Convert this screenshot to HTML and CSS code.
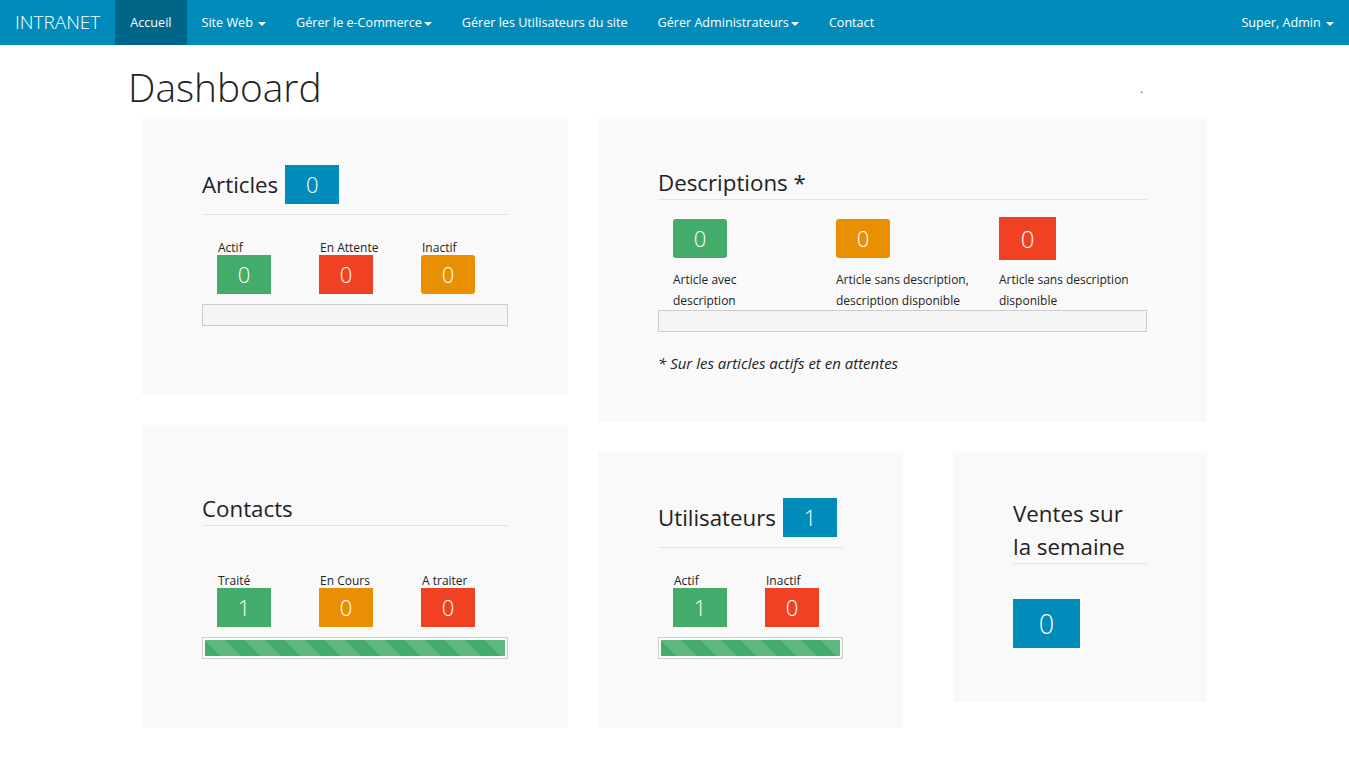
FILE: index.html
```html
<!DOCTYPE html>
<html lang="fr">
<head>
<meta charset="utf-8">
<title>Dashboard</title>
<link rel="stylesheet" href="styles.css">
</head>
<body>
<nav class="navbar">
  <a class="brand" href="#">INTRANET</a>
  <ul class="nav">
    <li class="active"><a href="#">Accueil</a></li>
    <li><a href="#">Site Web <span class="caret"></span></a></li>
    <li><a href="#">Gérer le e-Commerce<span class="caret"></span></a></li>
    <li><a href="#">Gérer les Utilisateurs du site</a></li>
    <li><a href="#">Gérer Administrateurs<span class="caret"></span></a></li>
    <li><a href="#">Contact</a></li>
  </ul>
  <ul class="nav nav-right">
    <li><a href="#">Super, Admin <span class="caret"></span></a></li>
  </ul>
</nav>

<main class="page">
  <div class="page-header">
    <h1>Dashboard</h1>
    <span class="dot">.</span>
  </div>

  <div class="grid">
    <div class="col col-left">
      <section class="panel panel-articles">
        <div class="heading heading-badge">
          <h3>Articles</h3>
          <span class="badge">0</span>
        </div>
        <div class="stats stats-3">
          <div class="stat"><div class="stat-label">Actif</div><div class="box green">0</div></div>
          <div class="stat"><div class="stat-label">En Attente</div><div class="box red">0</div></div>
          <div class="stat"><div class="stat-label">Inactif</div><div class="box orange rounded">0</div></div>
        </div>
        <div class="progress"></div>
      </section>

      <section class="panel panel-contacts">
        <div class="heading">
          <h3>Contacts</h3>
        </div>
        <div class="stats stats-3 stats-contacts">
          <div class="stat"><div class="stat-label">Traité</div><div class="box green">1</div></div>
          <div class="stat"><div class="stat-label">En Cours</div><div class="box orange">0</div></div>
          <div class="stat"><div class="stat-label">A traiter</div><div class="box red">0</div></div>
        </div>
        <div class="progress filled"><div class="bar"></div></div>
      </section>
    </div>

    <div class="col col-right">
      <section class="panel panel-desc">
        <div class="heading">
          <h3>Descriptions *</h3>
        </div>
        <div class="desc-cols">
          <div class="desc-col">
            <div class="desc-box"><div class="box green rounded">0</div></div>
            <div class="desc-label">Article avec<br>description</div>
          </div>
          <div class="desc-col">
            <div class="desc-box"><div class="box orange rounded">0</div></div>
            <div class="desc-label">Article sans description,<br>description disponible</div>
          </div>
          <div class="desc-col">
            <div class="desc-box"><div class="box red box-lg">0</div></div>
            <div class="desc-label">Article sans description<br>disponible</div>
          </div>
        </div>
        <div class="progress"></div>
        <p class="footnote">* Sur les articles actifs et en attentes</p>
      </section>

      <div class="row-bottom">
        <section class="panel panel-users">
          <div class="heading heading-badge">
            <h3>Utilisateurs</h3>
            <span class="badge">1</span>
          </div>
          <div class="stats stats-2">
            <div class="stat"><div class="stat-label">Actif</div><div class="box green">1</div></div>
            <div class="stat"><div class="stat-label">Inactif</div><div class="box red">0</div></div>
          </div>
          <div class="progress filled"><div class="bar"></div></div>
        </section>

        <section class="panel panel-sales">
          <div class="heading heading-2l">
            <h3>Ventes sur<br>la semaine</h3>
          </div>
          <div class="box blue box-xl">0</div>
        </section>
      </div>
    </div>
  </div>
</main>
</body>
</html>
```

FILE: styles.css
```css
* {
  box-sizing: border-box;
}

html, body {
  margin: 0;
  padding: 0;
}

body {
  font-family: "Open Sans", "Liberation Sans", sans-serif;
  font-size: 15px;
  line-height: 1.4;
  color: #222;
  background: #fff;
}

a {
  text-decoration: none;
  color: inherit;
}

/* ---------- navbar ---------- */
.navbar {
  display: flex;
  align-items: stretch;
  height: 45px;
  background: #008cba;
  color: #fff;
}

.brand {
  display: block;
  padding: 0 15px;
  font-size: 19px;
  font-weight: 300;
  line-height: 45px;
  color: #fff;
}

.nav {
  display: flex;
  margin: 0;
  padding: 0;
  list-style: none;
}

.nav li a {
  display: block;
  padding: 0 15px;
  font-size: 12.6px;
  line-height: 45px;
  color: #fff;
}

.nav li.active a {
  background: #006687;
}

.nav-right {
  margin-left: auto;
}

.caret {
  display: inline-block;
  width: 0;
  height: 0;
  margin-left: 2px;
  vertical-align: middle;
  border-top: 4px solid #fff;
  border-left: 4px solid transparent;
  border-right: 4px solid transparent;
}

/* ---------- page ---------- */
.page {
  width: 1093px;
  margin: 0 auto;
}

.page-header {
  display: flex;
  align-items: flex-start;
}

h1 {
  margin: 20px 0 10px;
  font-size: 38.8px;
  font-weight: 300;
  line-height: 44px;
  color: #222;
}

.dot {
  margin-left: auto;
  margin-right: 78px;
  margin-top: 38px;
  font-size: 10px;
  line-height: 12px;
}

.grid {
  display: flex;
  align-items: flex-start;
  gap: 30px;
  margin-left: 14px;
  width: 1065px;
}

.col {
  display: flex;
  flex-direction: column;
}

.col-left {
  width: 426px;
  gap: 30px;
}

.col-right {
  width: 609px;
}

.row-bottom {
  display: flex;
  align-items: flex-start;
  gap: 50px;
  margin-top: 30px;
}

/* ---------- panels ---------- */
.panel {
  background: #f9f9f9;
  padding: 46px 60px 69px;
}

.panel-contacts {
  padding-top: 67px;
}

.panel-desc {
  padding-top: 47px;
  padding-bottom: 48px;
}

.panel-users {
  width: 305px;
}

.panel-sales {
  width: 254px;
  padding-top: 45px;
  padding-bottom: 54px;
}

.heading {
  border-bottom: 1px solid #e3e3e3;
}

.heading h3 {
  margin: 0;
  font-size: 22.3px;
  font-weight: 400;
  line-height: 33px;
  color: #222;
}

.heading-badge {
  display: flex;
  align-items: center;
  gap: 7px;
  padding-bottom: 10px;
}

.badge {
  display: flex;
  align-items: center;
  justify-content: center;
  width: 54px;
  height: 39px;
  background: #008cba;
  color: #fff;
  font-size: 22px;
  font-weight: 300;
}

/* ---------- stat boxes ---------- */
.stats {
  display: flex;
  margin-top: 25px;
}

.stats-contacts {
  margin-top: 47px;
}

.stat {
  padding-left: 15px;
}

.stats-3 .stat {
  width: 102px;
}

.stats-2 .stat {
  width: 92px;
}

.stat-label {
  padding-left: 1px;
  font-size: 12px;
  line-height: 15px;
  color: #222;
}

.box {
  display: flex;
  align-items: center;
  justify-content: center;
  width: 54px;
  height: 39px;
  color: #fff;
  font-size: 22px;
  font-weight: 300;
}

.box.rounded {
  border-radius: 3px;
}

.green { background: #43ac6a; }
.red { background: #f04124; }
.orange { background: #e99002; }
.blue { background: #008cba; }

.box-lg {
  width: 57px;
  height: 43px;
  font-size: 24px;
}

.box-xl {
  width: 67px;
  height: 49px;
  margin-top: 35px;
  font-size: 27px;
}

/* ---------- descriptions ---------- */
.desc-cols {
  display: flex;
  margin-top: 17px;
}

.desc-col {
  width: 163px;
  padding: 0 15px;
}

.desc-box {
  display: flex;
  align-items: center;
  height: 43px;
}

.desc-label {
  margin-top: 9px;
  font-size: 12px;
  line-height: 21px;
  color: #222;
}

.footnote {
  margin: 21px 0 0;
  font-size: 15px;
  font-style: italic;
  line-height: 21px;
}

/* ---------- progress ---------- */
.progress {
  height: 22px;
  margin-top: 10px;
  border: 1px solid #ccc;
  background: #f5f5f5;
  padding: 2px;
}

.panel-desc .progress {
  margin-top: -1px;
}

.progress.filled {
  background: #fff;
}

.bar {
  height: 16px;
  width: 100%;
  background-color: #43ac6a;
  background-image: linear-gradient(45deg,
    rgba(255,255,255,.15) 25%, transparent 25%,
    transparent 50%, rgba(255,255,255,.15) 50%,
    rgba(255,255,255,.15) 75%, transparent 75%, transparent);
  background-size: 40px 40px;
}
```
